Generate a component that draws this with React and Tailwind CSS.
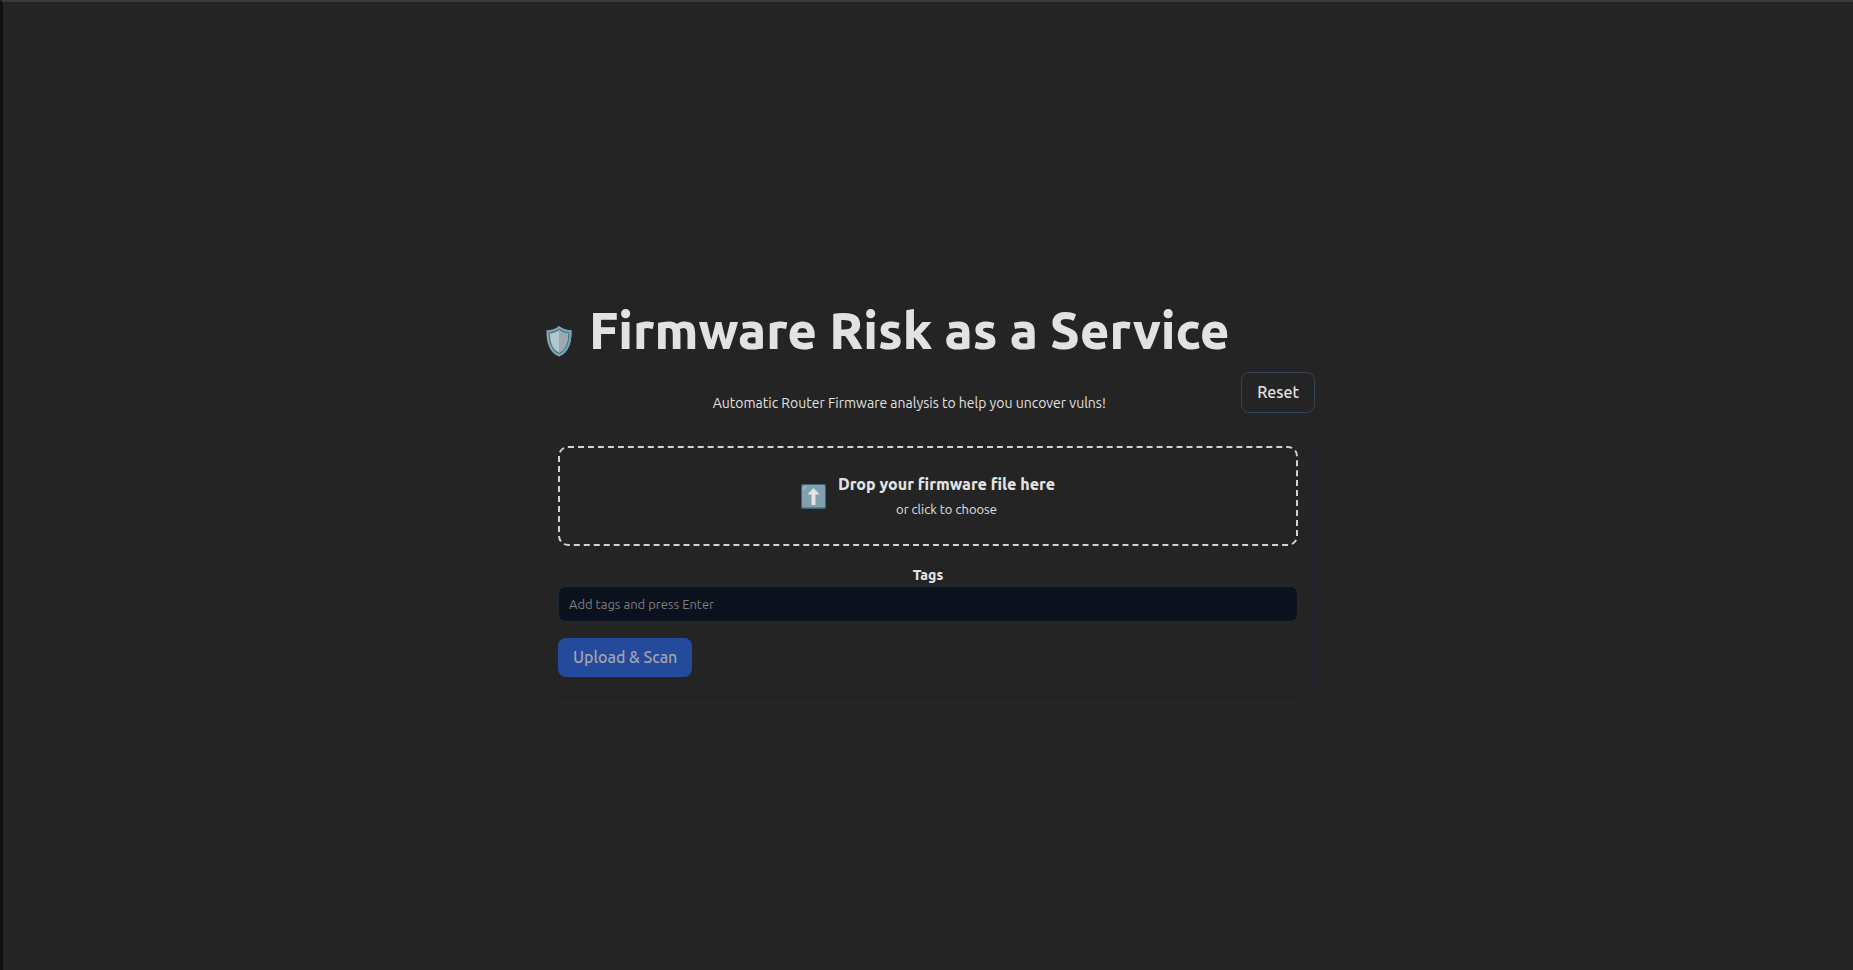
function ShieldIcon() {
  return (
    <svg className="h-8 w-7" viewBox="0 0 28 32" aria-hidden="true">
      <path d="M14 1C10.600 4 6 5.200 1.500 5.200C1.200 17 4 27.500 14 31.500C24 27.500 26.800 17 26.500 5.200C22 5.200 17.400 4 14 1Z" fill="#8fa3ad" />
      <path d="M14 1C17.400 4 22 5.200 26.500 5.200C26.800 17 24 27.500 14 31.500Z" fill="#7da3b1" />
      <path d="M14 4.300C11 6.700 7.500 7.800 4.200 8C4.200 17.500 6.500 25 14 28.600C21.500 25 23.800 17.500 23.800 8C20.500 7.800 17 6.700 14 4.300Z" fill="#b0c8cd" stroke="#437a88" strokeWidth="1.200" />
      <path d="M14 5C17 7.300 20.200 8.300 23.200 8.600C23.100 17.500 20.900 24.500 14 28Z" fill="#9ca9b1" />
    </svg>
  );
}

function UploadIcon() {
  return (
    <svg className="size-[25px] shrink-0" viewBox="0 0 25 25" aria-hidden="true">
      <rect width="25" height="25" rx="1.500" fill="#3d6674" />
      <rect x="1" y="1" width="23" height="22.500" rx="1.500" fill="#819fad" />
      <path d="M2 7V4Q2 2 4 2H7Q3.500 3 2 7Z" fill="#a3bcc6" />
      <path d="M12.500 4L18.500 10.500H14.500V21H10.500V10.500H6.500Z" fill="#e4e4e4" />
    </svg>
  );
}

export default function App() {
  return (
    <div className="flex min-h-screen items-center justify-center border-t-2 border-l-3 border-t-[#3b3a43] border-l-[#101010] bg-[#242424] font-['Ubuntu','Noto_Sans',sans-serif] text-[#e2e2e2]">
      <main className="w-full max-w-[774px]">
        <header className="flex items-end justify-between">
          <div className="flex items-center gap-3">
            <div className="flex w-9 shrink-0 justify-center">
              <ShieldIcon />
            </div>
            <div className="pt-[33px] text-center">
              <h1 className="text-[51px] leading-14 font-extrabold whitespace-nowrap">Firmware Risk as a Service</h1>
              <p className="mt-[35px] text-sm leading-5">Automatic Router Firmware analysis to help you uncover vulns!</p>
            </div>
          </div>
          <button type="button" className="h-[41px] shrink-0 rounded-lg border border-[#334155] px-[15px] text-base font-medium">
            Reset
          </button>
        </header>

        <form className="mt-4 rounded-xl border border-[#1f2937] p-4 pb-[26px]" onSubmit={(e) => e.preventDefault()}>
          <label className="flex h-[100px] cursor-pointer items-center justify-center gap-3 rounded-[10px] border-2 border-dashed border-[#cbd5e1] pt-0.5">
            <UploadIcon />
            <span className="flex flex-col text-center">
              <span className="text-base leading-[25px] font-extrabold">Drop your firmware file here</span>
              <span className="text-[13px] leading-[25px]">or click to choose</span>
            </span>
            <input type="file" className="sr-only" />
          </label>
          <label htmlFor="tags" className="mt-[19px] mb-px block text-center text-sm leading-5 font-extrabold">
            Tags
          </label>
          <input
            id="tags"
            type="text"
            placeholder="Add tags and press Enter"
            className="block h-9 w-full rounded-lg border border-[#1b2836] bg-[#0b121e] px-2.5 text-[13px] placeholder:text-[#7b7d80]"
          />
          <button type="submit" disabled className="mt-4 h-[39px] rounded-lg bg-[#244a9c] px-[15px] text-base font-medium text-[#a3a5a9]">
            Upload &amp; Scan
          </button>
        </form>
      </main>
    </div>
  );
}
